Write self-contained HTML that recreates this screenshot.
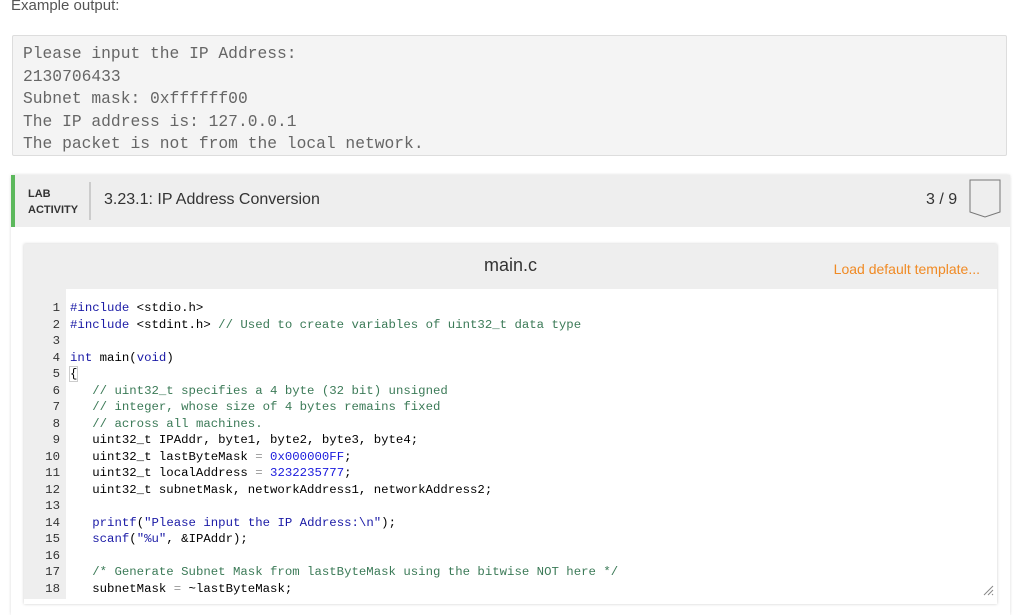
<!DOCTYPE html>
<html><head><meta charset="utf-8"><style>
body{margin:0;width:1024px;height:603px;overflow:hidden;background:#fff;font-family:"Liberation Sans",sans-serif;position:relative}
.ex{position:absolute;left:11px;top:-3px;font-size:15px;color:#555;font-weight:300}
.out{position:absolute;left:12px;top:35px;width:995px;height:121px;background:#f4f4f4;border:1px solid #ddd;border-radius:2px;box-sizing:border-box}
.out pre{margin:0;position:absolute;left:10px;top:7px;font-family:"Liberation Mono",monospace;font-size:16.3px;line-height:22.5px;color:#666}
.card{position:absolute;left:11px;top:175px;width:999px;height:440px;background:#fff;box-shadow:0 0 3px rgba(0,0,0,.15)}
.hdr{position:absolute;left:0;top:0;width:999px;height:52px;background:#eee;border-left:4px solid #5cb85c;box-sizing:border-box}
.lab{position:absolute;left:13px;top:11px;font-size:11px;font-weight:bold;color:#333;line-height:16px}
.sep{position:absolute;left:74px;top:7px;width:2px;height:38px;background:#ccc}
.ttl{position:absolute;left:89px;top:16px;font-size:16px;color:#333}
.cnt{position:absolute;left:911px;top:16px;font-size:16px;color:#333}
.panel{position:absolute;left:13px;top:69px;width:973px;height:360px;background:#fff;box-shadow:0 0 3px rgba(0,0,0,.2)}
.ph{height:45px;background:#eee;position:relative}
.fn{position:absolute;left:0;right:0;top:11px;text-align:center;font-size:18px;color:#333}
.ld{position:absolute;right:17px;top:17px;font-size:14px;color:#f08a24}
.gut{position:absolute;left:0;top:45px;width:42px;height:310px;background:#eee}
.code{position:absolute;left:0;top:56px;font-family:"Liberation Mono",monospace;font-size:12.35px;line-height:16.5px;color:#000;margin:0;white-space:pre}
.n{display:inline-block;width:36px;text-align:right;color:#333;margin-right:10px}
.k{color:#1a1aa6}.c{color:#3b7a57}.s{color:#1a1aa6}.b{color:#1a1add}
</style></head><body>
<div class="ex">Example output:</div>
<div class="out"><pre>Please input the IP Address:
2130706433
Subnet mask: 0xffffff00
The IP address is: 127.0.0.1
The packet is not from the local network.</pre></div>
<div class="card">
<div class="hdr">
<div class="lab">LAB<br>ACTIVITY</div><div class="sep"></div>
<div class="ttl">3.23.1: IP Address Conversion</div>
<div class="cnt">3 / 9</div>
<svg style="position:absolute;left:952px;top:4px" width="36" height="40"><path d="M3 1H33V33L18 38L3 33Z" fill="none" stroke="#777" stroke-width="1"/></svg>
</div>
<div class="panel">
<div class="ph"><div class="fn">main.c</div><div class="ld">Load default template...</div></div>
<div class="gut"></div>
<pre class="code"><span class="n">1</span><span class="k">#include</span> &lt;stdio.h&gt;
<span class="n">2</span><span class="k">#include</span> &lt;stdint.h&gt; <span class="c">// Used to create variables of uint32_t data type</span>
<span class="n">3</span>
<span class="n">4</span><span class="k">int</span> main(<span class="k">void</span>)
<span class="n">5</span><span style="outline:1px solid #ccc">{</span>
<span class="n">6</span>   <span class="c">// uint32_t specifies a 4 byte (32 bit) unsigned</span>
<span class="n">7</span>   <span class="c">// integer, whose size of 4 bytes remains fixed</span>
<span class="n">8</span>   <span class="c">// across all machines.</span>
<span class="n">9</span>   uint32_t IPAddr, byte1, byte2, byte3, byte4;
<span class="n">10</span>   uint32_t lastByteMask <span style="color:#999">=</span> <span class="b">0x000000FF</span>;
<span class="n">11</span>   uint32_t localAddress <span style="color:#999">=</span> <span class="b">3232235777</span>;
<span class="n">12</span>   uint32_t subnetMask, networkAddress1, networkAddress2;
<span class="n">13</span>
<span class="n">14</span>   <span class="k">printf</span>(<span class="s">"Please input the IP Address:\n"</span>);
<span class="n">15</span>   <span class="k">scanf</span>(<span class="s">"%u"</span>, &amp;IPAddr);
<span class="n">16</span>
<span class="n">17</span>   <span class="c">/* Generate Subnet Mask from lastByteMask using the bitwise NOT here */</span>
<span class="n">18</span>   subnetMask <span style="color:#999">=</span> ~lastByteMask;</pre>
<svg style="position:absolute;left:958px;top:340px" width="12" height="12"><path d="M11 2L2 11M11 6L6 11M11 10L10 11" stroke="#888" stroke-width="1"/></svg>
</div>
</div>
</body></html>
